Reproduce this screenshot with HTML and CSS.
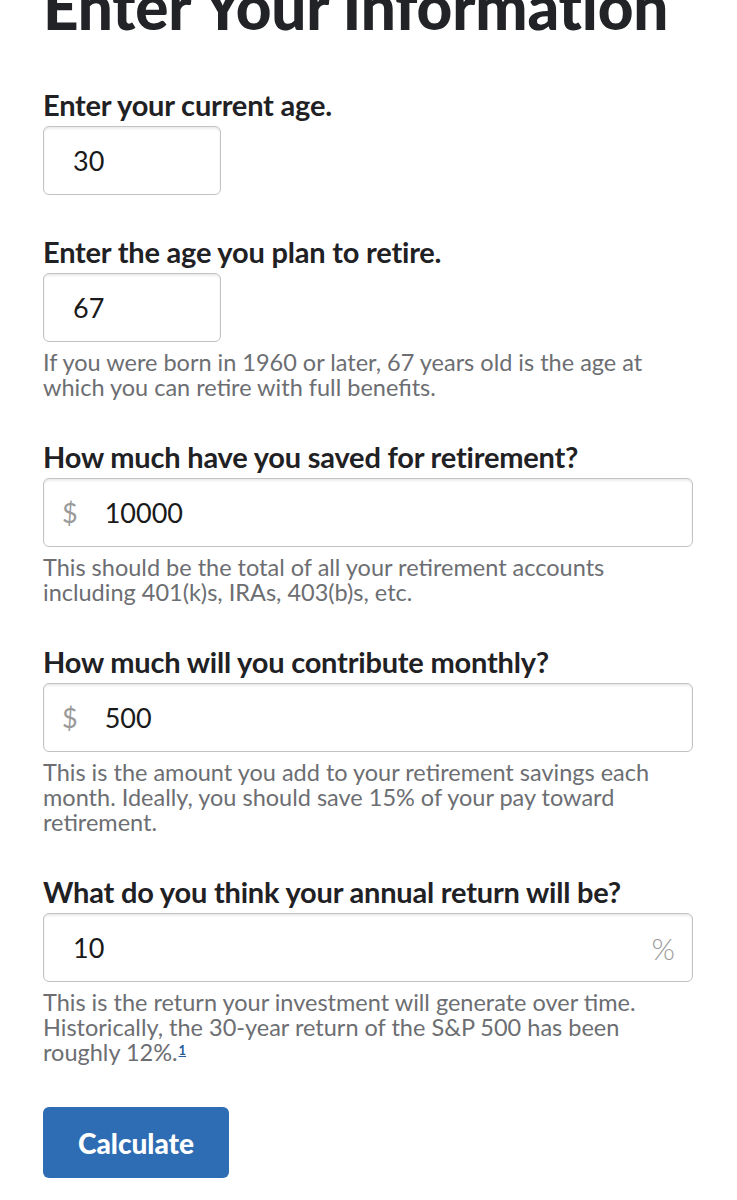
FILE: index.html
```html
<!DOCTYPE html>
<html lang="en">
<head>
<meta charset="utf-8">
<title>Enter Your Information</title>
<link rel="stylesheet" href="styles.css">
</head>
<body>
<main class="page">
  <h1 class="title">Enter Your Information</h1>
  <form class="form">
    <div class="field">
      <label class="label" for="age">Enter your current age.</label>
      <div class="control control-short">
        <input class="input" id="age" type="text" value="30">
      </div>
    </div>
    <div class="field">
      <label class="label" for="retire">Enter the age you plan to retire.</label>
      <div class="control control-short">
        <input class="input" id="retire" type="text" value="67">
      </div>
      <p class="help">If you were born in 1960 or later, 67 years old is the age at which you can retire with full benefits.</p>
    </div>
    <div class="field">
      <label class="label" for="saved">How much have you saved for retirement?</label>
      <div class="control">
        <span class="prefix">$</span>
        <input class="input input-prefixed" id="saved" type="text" value="10000">
      </div>
      <p class="help">This should be the total of all your retirement accounts including 401(k)s, IRAs, 403(b)s, etc.</p>
    </div>
    <div class="field">
      <label class="label" for="monthly">How much will you contribute monthly?</label>
      <div class="control">
        <span class="prefix">$</span>
        <input class="input input-prefixed" id="monthly" type="text" value="500">
      </div>
      <p class="help">This is the amount you add to your retirement savings each month. Ideally, you should save 15% of your pay toward retirement.</p>
    </div>
    <div class="field">
      <label class="label" for="return">What do you think your annual return will be?</label>
      <div class="control">
        <input class="input" id="return" type="text" value="10">
        <span class="suffix">%</span>
      </div>
      <p class="help">This is the return your investment will generate over time. Historically, the 30-year return of the S&amp;P 500 has been roughly 12%.<a class="footnote" href="#fn1">1</a></p>
    </div>
    <button class="button" type="button">Calculate</button>
  </form>
</main>
</body>
</html>
```

FILE: styles.css
```css
html, body {
  margin: 0;
  padding: 0;
  background: #ffffff;
}

body {
  font-family: Lato, "Open Sans", "Liberation Sans", sans-serif;
  color: #212326;
  overflow: hidden;
}

.page {
  padding: 0 44px 0 43px;
}

.title {
  margin: -28px 0 0 0;
  font-size: 62px;
  line-height: 68px;
  font-weight: 900;
  letter-spacing: -0.2px;
  color: #212326;
}

.form {
  display: flex;
  flex-direction: column;
  margin-top: 49px;
}

.field {
  display: flex;
  flex-direction: column;
  margin-bottom: 41px;
}

.label {
  font-size: 29px;
  line-height: 32px;
  font-weight: 700;
  letter-spacing: -0.2px;
  margin-bottom: 5px;
  color: #1f2124;
}

.control {
  display: flex;
  align-items: center;
  height: 69px;
  box-sizing: border-box;
  border: 1px solid #c2c2c2;
  border-radius: 6px;
  box-shadow: inset 0 2px 2px rgba(0, 0, 0, 0.08);
  background: #fff;
}

.control-short {
  width: 178px;
}

.input {
  flex: 1;
  min-width: 0;
  border: 0;
  outline: 0;
  background: transparent;
  font-family: inherit;
  font-size: 27px;
  color: #1a1a1a;
  padding: 0 0 0 29px;
  height: 100%;
}

.input-prefixed {
  padding-left: 27px;
}

.prefix {
  font-size: 27px;
  color: #9a9a9a;
  padding-left: 18px;
}

.suffix {
  font-size: 30px;
  font-weight: 300;
  color: #9a9a9a;
  padding-right: 17px;
}

.help {
  margin: 8px 0 0 0;
  font-size: 23.5px;
  line-height: 25px;
  color: #6c6e72;
}

.footnote {
  font-size: 13px;
  vertical-align: top;
  line-height: 20px;
  color: #2a5d9c;
  font-weight: 700;
  margin-left: 1px;
}

.button {
  align-self: flex-start;
  width: 186px;
  height: 71px;
  border: 0;
  border-radius: 6px;
  background: #2e6db4;
  color: #fff;
  font-family: inherit;
  font-size: 28px;
  font-weight: 900;
  margin-top: 1px;
}
```
